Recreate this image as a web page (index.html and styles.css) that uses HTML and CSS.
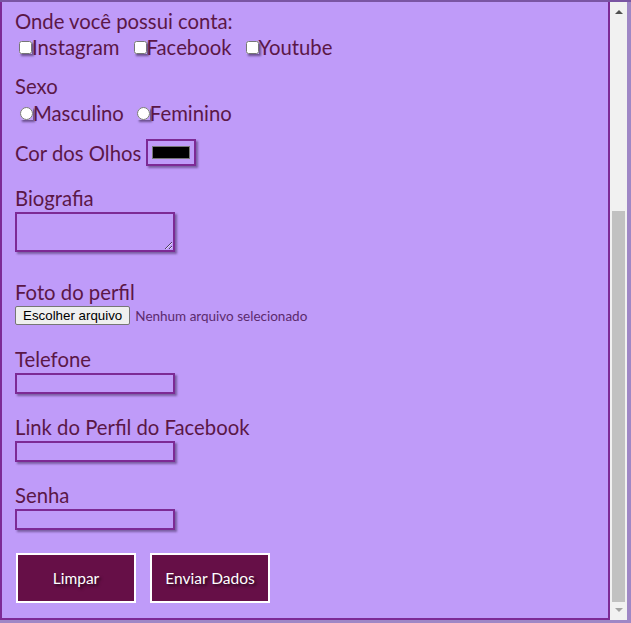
FILE: index.html
```html
<!DOCTYPE html>
<html lang="pt-BR">
<head>
<meta charset="utf-8">
<title>Cadastro</title>
<link rel="stylesheet" href="styles.css">
</head>
<body>
<div class="window">
  <form class="cadastro">
    <div class="field field-contas">
      <span class="label">Onde você possui conta:</span>
      <div class="options">
        <label class="option"><input class="check" type="checkbox">Instagram</label>
        <label class="option"><input class="check" type="checkbox">Facebook</label>
        <label class="option"><input class="check" type="checkbox">Youtube</label>
      </div>
    </div>

    <div class="field field-sexo">
      <span class="label">Sexo</span>
      <div class="options options-radio">
        <label class="option"><input class="radio" type="radio" name="sexo">Masculino</label>
        <label class="option"><input class="radio" type="radio" name="sexo">Feminino</label>
      </div>
    </div>

    <div class="field field-cor">
      <label class="inline-label" for="cor">Cor dos Olhos</label>
      <input class="color-input" id="cor" type="color" value="#000000">
    </div>

    <div class="field field-bio">
      <label class="label" for="bio">Biografia</label>
      <textarea class="bio" id="bio"></textarea>
    </div>

    <div class="field field-foto">
      <span class="label">Foto do perfil</span>
      <div class="file-row">
        <label class="file-button" for="foto">Escolher arquivo</label>
        <input class="file-hidden" id="foto" type="file">
        <span class="file-status">Nenhum arquivo selecionado</span>
      </div>
    </div>

    <div class="field field-tel">
      <label class="label" for="tel">Telefone</label>
      <input class="text-input" id="tel" type="tel">
    </div>
    <div class="field">
      <label class="label" for="face">Link do Perfil do Facebook</label>
      <input class="text-input" id="face" type="url">
    </div>
    <div class="field">
      <label class="label" for="senha">Senha</label>
      <input class="text-input" id="senha" type="password">
    </div>

    <div class="actions">
      <button class="btn" type="reset">Limpar</button>
      <button class="btn" type="submit">Enviar Dados</button>
    </div>
  </form>

  <div class="scrollbar" aria-hidden="true">
    <div class="sb-btn sb-up"><span class="tri-up"></span></div>
    <div class="sb-track"><div class="sb-thumb"></div></div>
    <div class="sb-btn sb-down"><span class="tri-down"></span></div>
  </div>
</div>
</body>
</html>
```

FILE: styles.css
```css
html, body {
  margin: 0;
  padding: 0;
}

body {
  background: #9f87c6;
  border-top: 2px solid #7a55a3;
  height: 621px;
  box-sizing: border-box;
  overflow: hidden;
}

.window {
  display: flex;
  width: 627px;
  height: 618px;
}

.cadastro {
  flex: none;
  box-sizing: border-box;
  width: 610px;
  border: 2px solid #7d2a95;
  border-top: 0;
  background: #bf9bf9;
  padding: 7px 13px 15px;
  color: #5b1747;
  font-family: Lato, "Open Sans", sans-serif;
  font-size: 20.3px;
  overflow: hidden;
}

.field {
  margin-top: 21px;
}

.field-contas {
  margin-top: 0;
}

.label {
  display: block;
  line-height: 24px;
  margin-bottom: 2px;
}

.text-input {
  display: block;
  box-sizing: border-box;
  width: 160px;
  height: 21px;
  margin: 0;
  border: 2px solid #7d2a95;
  background: transparent;
  box-shadow: 2px 2px 2px rgba(40, 20, 60, 0.45);
}

.options {
  display: flex;
  align-items: center;
  height: 24px;
}

.option {
  display: inline-flex;
  align-items: center;
  margin-right: 10px;
}

.options-radio .option {
  margin-right: 8px;
}

.check,
.radio {
  width: 13px;
  height: 13px;
  margin: 0 0 0 4px;
  box-shadow: 2px 2px 2px rgba(40, 20, 60, 0.55);
}

.radio {
  margin-left: 5px;
  border-radius: 50%;
}

.field-sexo {
  margin-top: 15px;
}

.options-radio {
  margin-top: 3px;
}

.field-cor {
  margin-top: 14px;
  display: flex;
  align-items: center;
  height: 27px;
}

.inline-label {
  line-height: 24px;
  margin-right: 5px;
}

.color-input {
  box-sizing: border-box;
  width: 50px;
  height: 27px;
  margin: 0;
  padding: 1px 2px;
  border: 2px solid #7d2a95;
  background: transparent;
  box-shadow: 2px 2px 2px rgba(40, 20, 60, 0.45);
}

.field-bio {
  margin-top: 20px;
}

.bio {
  display: block;
  box-sizing: border-box;
  width: 160px;
  height: 40px;
  margin: 0;
  border: 2px solid #7d2a95;
  background: transparent;
  box-shadow: 2px 2px 2px rgba(40, 20, 60, 0.45);
}

.field-foto {
  margin-top: 28px;
}

.file-row {
  display: flex;
  align-items: center;
  gap: 5px;
  margin-top: 2px;
  height: 19px;
}

.file-button {
  box-sizing: border-box;
  height: 19px;
  padding: 0 7px;
  border: 1px solid #767676;
  border-radius: 2px;
  background: #efefef;
  color: #000;
  font-family: "Liberation Sans", Arial, sans-serif;
  font-size: 13.33px;
  line-height: 17px;
  white-space: nowrap;
}

.file-hidden {
  display: none;
}

.file-status {
  font-size: 13.5px;
  color: #5c2a6e;
  white-space: nowrap;
}

.field-tel {
  margin-top: 22px;
}

.actions {
  display: flex;
  gap: 14px;
  margin-top: 23px;
  padding-left: 1px;
}

.btn {
  box-sizing: border-box;
  width: 120px;
  height: 50px;
  margin: 0;
  border: 2px solid #ffffff;
  background: #660f47;
  color: #ffffff;
  font-family: Lato, "Open Sans", sans-serif;
  font-size: 15.5px;
  text-shadow: 2px 2px 3px rgba(0, 0, 0, 0.6);
}

/* scrollbar column */
.scrollbar {
  flex: none;
  width: 17px;
  display: flex;
  flex-direction: column;
  background: #f1f1f1;
}

.sb-btn {
  flex: none;
  height: 17px;
  display: flex;
  justify-content: center;
}

.sb-up {
  align-items: flex-start;
}

.sb-down {
  align-items: flex-end;
}

.tri-up {
  width: 0;
  height: 0;
  margin-top: 8px;
  border-left: 4px solid transparent;
  border-right: 4px solid transparent;
  border-bottom: 4px solid #505050;
}

.tri-down {
  width: 0;
  height: 0;
  margin-bottom: 8px;
  border-left: 4px solid transparent;
  border-right: 4px solid transparent;
  border-top: 4px solid #a3a3a3;
}

.sb-track {
  flex: 1;
  display: flex;
  flex-direction: column;
  justify-content: flex-end;
  padding: 0 2px 1px;
}

.sb-thumb {
  height: 391px;
  background: #c1c1c1;
}
```
